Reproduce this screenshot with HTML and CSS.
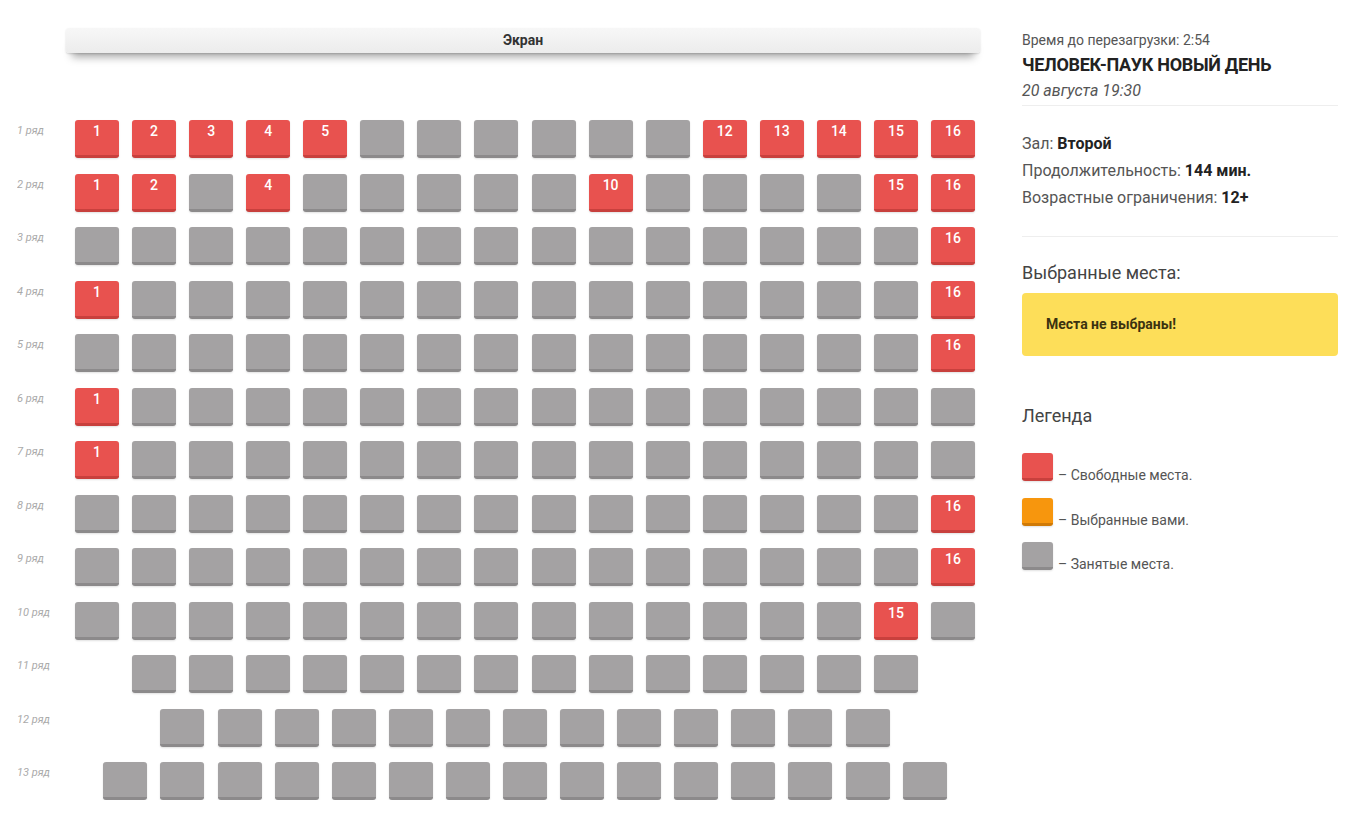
FILE: index.html
```html
<!DOCTYPE html>
<html lang="ru">

<head>
    <meta charset="UTF-8">
    <meta name="viewport" content="width=device-width, initial-scale=1.0">
    <title>Выбор мест</title>
    <link rel="stylesheet" href="styles.css">
</head>

<body>
    <div class="page">
        <div class="hall">
            <div class="screen">Экран</div>
            <div class="rows" id="rows"></div>
        </div>

        <div class="side">
            <p class="timer">Время до перезагрузки: 2:54</p>
            <h2 class="film">ЧЕЛОВЕК-ПАУК НОВЫЙ ДЕНЬ</h2>
            <p class="date">20 августа 19:30</p>
            <hr>
            <div class="info">
                <p>Зал: <b>Второй</b></p>
                <p>Продолжительность: <b>144 мин.</b></p>
                <p>Возрастные ограничения: <b>12+</b></p>
            </div>
            <hr>
            <h3>Выбранные места:</h3>
            <div class="empty">Места не выбраны!</div>
            <h3 class="legend-title">Легенда</h3>
            <div class="legend">
                <div class="legend-item"><i class="seat free"></i> – Свободные места.</div>
                <div class="legend-item"><i class="seat mine"></i> – Выбранные вами.</div>
                <div class="legend-item"><i class="seat busy"></i> – Занятые места.</div>
            </div>
        </div>
    </div>

    <script src="script.js"></script>
</body>

</html>
```

FILE: script.js
```js
// количество мест в каждом ряду и номера свободных мест
const hall = [
    { count: 16, free: [1, 2, 3, 4, 5, 12, 13, 14, 15, 16] },
    { count: 16, free: [1, 2, 4, 10, 15, 16] },
    { count: 16, free: [16] },
    { count: 16, free: [1, 16] },
    { count: 16, free: [16] },
    { count: 16, free: [1] },
    { count: 16, free: [1] },
    { count: 16, free: [16] },
    { count: 16, free: [16] },
    { count: 16, free: [15] },
    { count: 14, free: [] },
    { count: 13, free: [] },
    { count: 15, free: [] }
]

const rows = document.querySelector('#rows')

hall.forEach((row, i) => {
    const div = document.createElement('div')
    div.className = 'row'

    let seats = ''
    for (let n = 1; n <= row.count; n++) {
        if (row.free.includes(n)) {
            seats += `<span class="seat free">${n}</span>`
        } else {
            seats += `<span class="seat busy"></span>`
        }
    }

    div.innerHTML = `
        <span class="row-name">${i + 1} ряд</span>
        <div class="seats">${seats}</div>
    `
    rows.append(div)
})
```

FILE: styles.css
```css
body {
    margin: 0;
    font-family: Roboto, "Liberation Sans", sans-serif;
    color: #444;
    background: #fff;
}

p,
h2,
h3 {
    margin: 0;
}

.page {
    display: flex;
    width: 1360px;
}

/* зал */
.hall {
    width: 1000px;
    padding-top: 28px;
}

.screen {
    margin-left: 66px;
    width: 914px;
    height: 25px;
    line-height: 25px;
    text-align: center;
    font-size: 14px;
    font-weight: bold;
    color: #333;
    background: linear-gradient(#f7f7f7, #ececec);
    border-radius: 3px;
    box-shadow: 0 10px 8px -6px rgba(0, 0, 0, 0.35), 0 1px 2px rgba(0, 0, 0, 0.15);
}

.rows {
    margin-top: 67px;
    display: flex;
    flex-direction: column;
    gap: 15.5px;
}

.row {
    display: flex;
}

.row-name {
    width: 58px;
    padding-left: 17px;
    padding-top: 3px;
    font-size: 11px;
    line-height: 16px;
    font-style: italic;
    color: #aaa;
}

.seats {
    width: 900px;
    display: flex;
    justify-content: center;
    gap: 13.1px;
}

.seat {
    display: block;
    box-sizing: border-box;
    width: 44px;
    height: 38px;
    border-radius: 3px;
    border-bottom: 3px solid;
    color: #fff;
    font-size: 14px;
    font-weight: 500;
    line-height: 20px;
    padding-top: 1px;
    text-align: center;
    box-shadow: 0 1px 2px rgba(0, 0, 0, 0.12);
}

.seat.free {
    background: #e8524f;
    border-color: #c8403d;
}

.seat.busy {
    background: #a4a2a3;
    border-color: #8c8a8b;
}

.seat.mine {
    background: #f7960d;
    border-color: #d07a06;
}

/* правая колонка */
.side {
    width: 316px;
    margin-left: 22px;
    padding-top: 30px;
}

.timer {
    font-size: 14px;
    line-height: 20px;
    color: #555;
}

.film {
    font-size: 18px;
    line-height: 30px;
    letter-spacing: -0.3px;
    color: #222;
}

.date {
    font-size: 16px;
    line-height: 22px;
    font-style: italic;
    color: #555;
}

hr {
    border: none;
    border-top: 1px solid #eee;
    margin: 3px 0 0;
}

.info {
    padding: 24px 0 22px;
}

.info p {
    font-size: 16px;
    line-height: 27px;
    color: #555;
}

.info b {
    color: #222;
}

h3 {
    font-weight: normal;
    font-size: 18px;
    line-height: 24px;
    color: #444;
    margin-top: 24px;
}

.empty {
    margin-top: 8px;
    height: 63px;
    line-height: 63px;
    padding-left: 24px;
    box-sizing: border-box;
    background: #fdde59;
    border-radius: 4px;
    font-size: 14px;
    font-weight: bold;
    color: #3b3210;
}

.legend-title {
    margin-top: 48px;
}

.legend {
    margin-top: 25px;
    display: flex;
    flex-direction: column;
    gap: 16.5px;
}

.legend-item {
    display: flex;
    align-items: flex-end;
    gap: 5px;
    font-size: 14px;
    line-height: 12px;
    color: #555;
}

.legend-item .seat {
    width: 31px;
    height: 28px;
}
```
